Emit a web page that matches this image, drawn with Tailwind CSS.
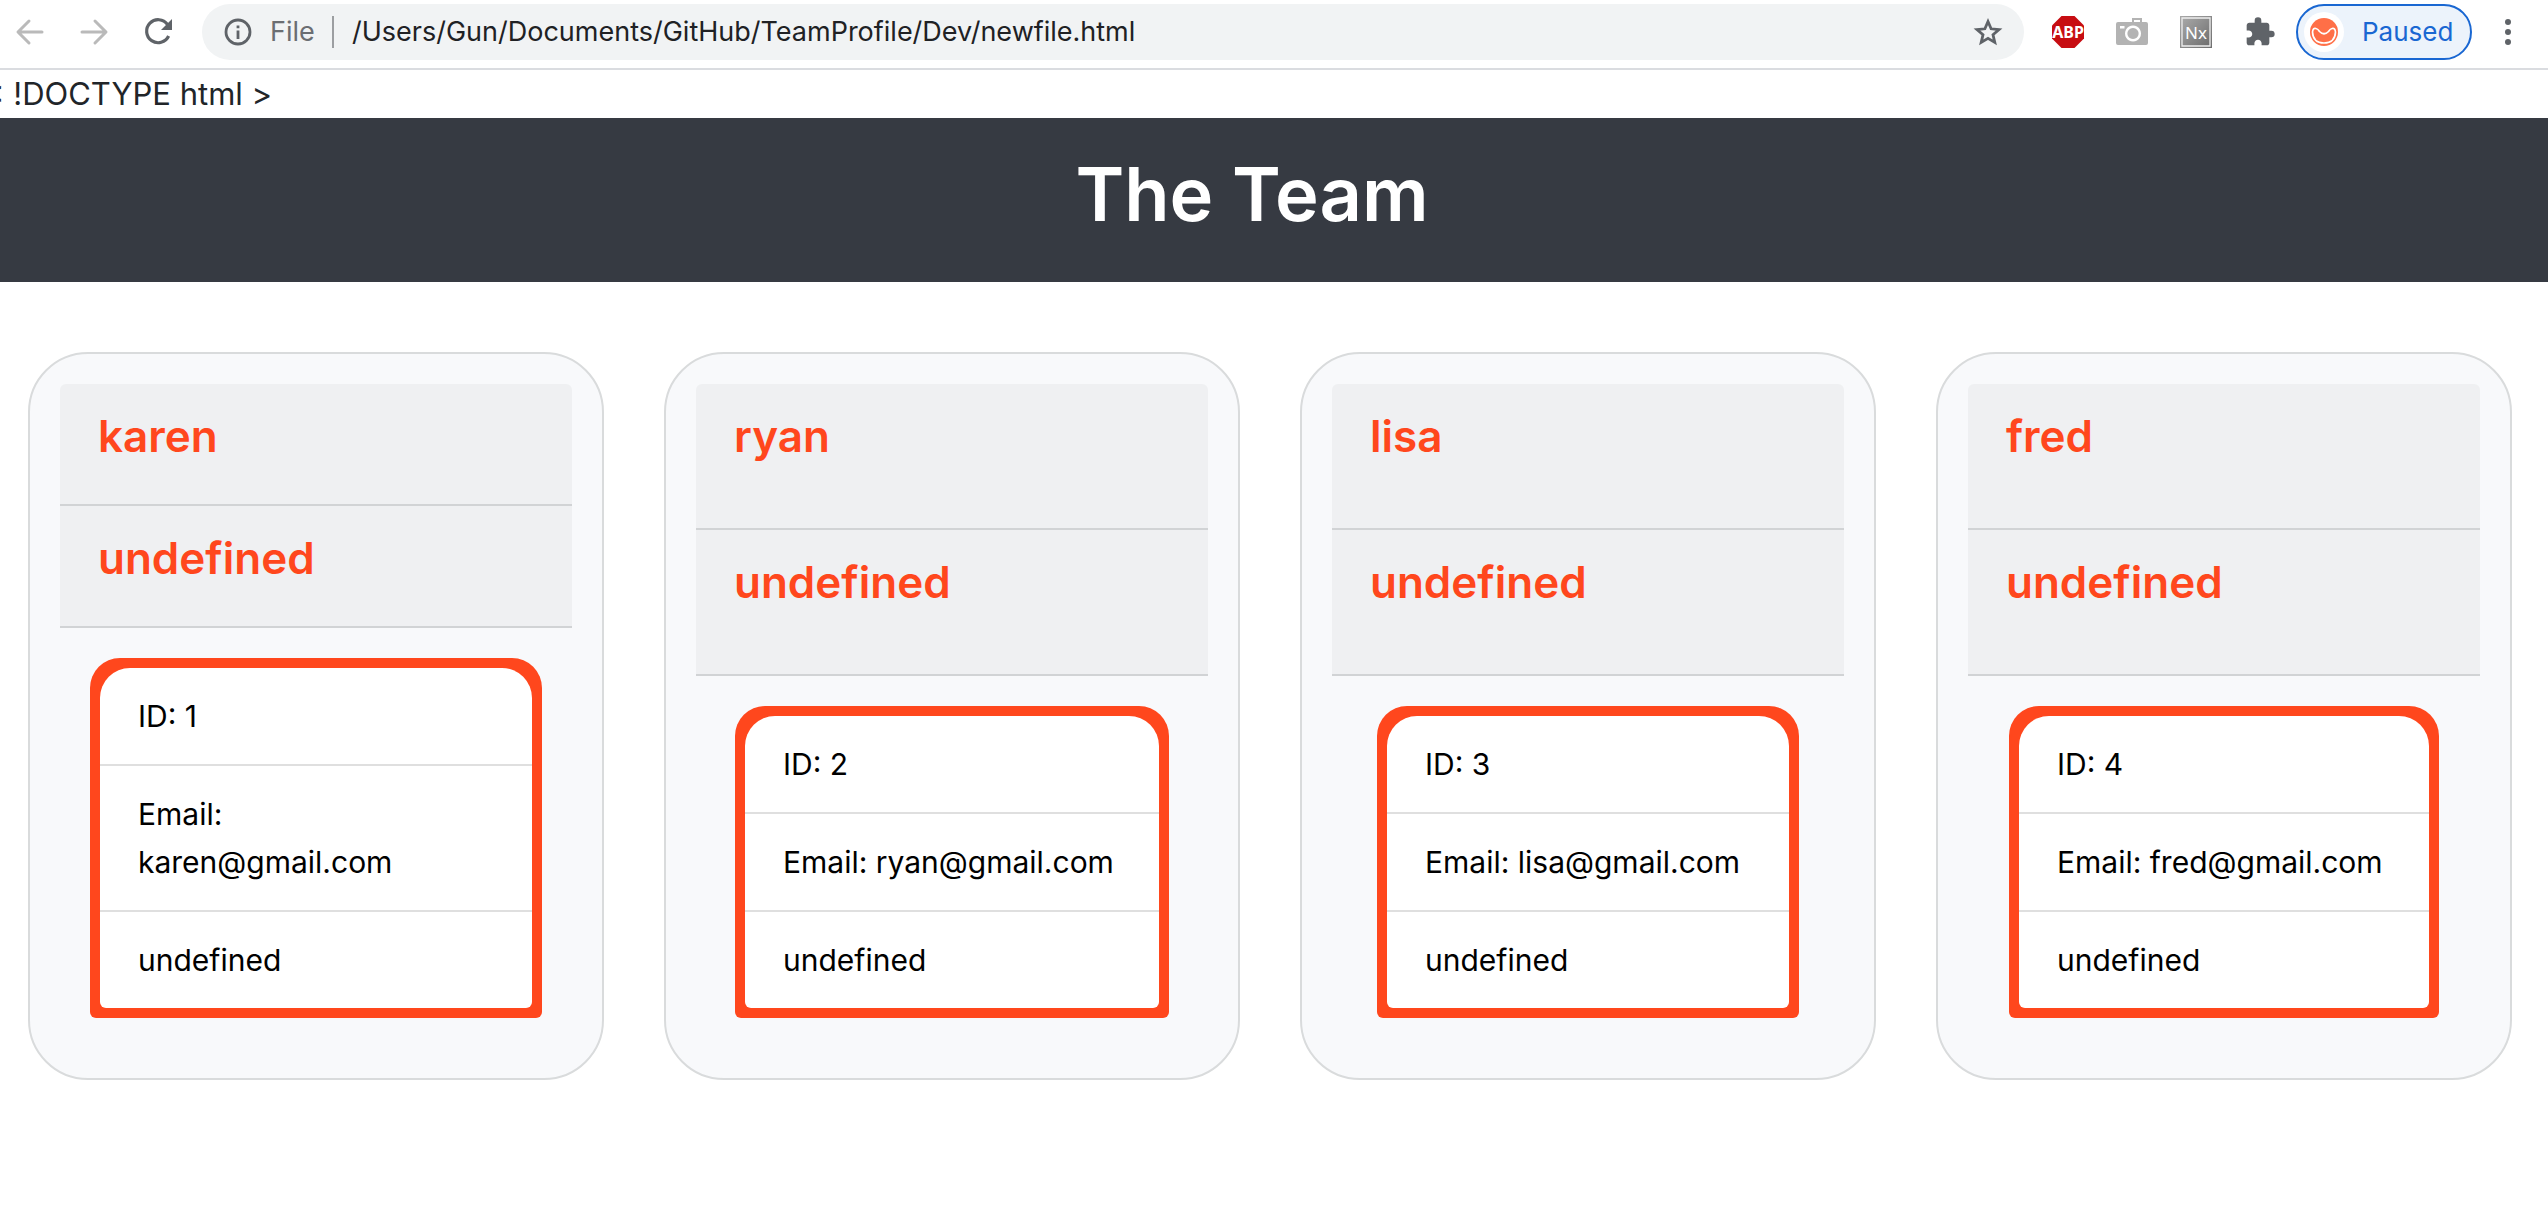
<!DOCTYPE html>
<html lang="en">
<head>
<meta charset="utf-8">
<title>The Team</title>
<script src="https://cdn.jsdelivr.net/npm/@tailwindcss/browser@4"></script>
</head>
<body class="min-h-screen overflow-x-hidden bg-white font-['Inter',sans-serif] text-[30px] leading-[48px] text-[#212529]">

<!-- Browser toolbar -->
<nav class="flex items-start border-b-2 border-[#dadce0] bg-white pt-1 pr-6 pb-2 pl-3.5 text-[27px] leading-8">
  <div class="flex h-14 items-center gap-8">
    <button type="button" aria-label="Back" class="size-8">
      <svg viewBox="0 0 32 32" class="size-8" fill="none" stroke="#bababa" stroke-width="3" stroke-linecap="round" stroke-linejoin="round"><path d="M28 16H5M15 5L4 16l11 11"/></svg>
    </button>
    <button type="button" aria-label="Forward" class="size-8">
      <svg viewBox="0 0 32 32" class="size-8" fill="none" stroke="#bababa" stroke-width="3" stroke-linecap="round" stroke-linejoin="round"><path d="M4 16h23M17 5l11 11-11 11"/></svg>
    </button>
    <button type="button" aria-label="Reload" class="size-8">
      <svg viewBox="0 0 32 32" class="size-8"><path d="M25.500 8.500A11.500 11.500 0 1 0 26.600 20" fill="none" stroke="#5f6368" stroke-width="3.200"/><path d="M30 3v11H19z" fill="#5f6368"/></svg>
    </button>
  </div>
  <div class="ml-7 flex h-14 flex-1 items-center rounded-full bg-[#f1f3f4] pr-5 pl-5">
    <svg viewBox="0 0 32 32" class="size-8" aria-hidden="true"><circle cx="16" cy="16" r="12" fill="none" stroke="#5f6368" stroke-width="2.800"/><path d="M14.600 14.500h2.800V23h-2.800zM14.600 9.500h2.800v2.800h-2.800z" fill="#5f6368"/></svg>
    <span class="ml-4 w-12 text-[#6b6e72]">File</span>
    <span class="mr-[18px] ml-3.5 h-8 w-0.5 bg-[#9c9ea1]"></span>
    <input type="text" aria-label="Address" value="/Users/Gun/Documents/GitHub/TeamProfile/Dev/newfile.html" class="min-w-0 flex-1 bg-transparent text-[#202124] outline-none">
    <button type="button" aria-label="Bookmark this page" class="size-8">
      <svg viewBox="0 0 32 32" class="size-8" fill="none" stroke="#5f6368" stroke-width="2.800"><path d="M16 5.500l3.100 7.300 7.900.7-6 5.200 1.800 7.700L16 22.300l-6.800 4.100L11 18.700l-6-5.200 7.900-.7z"/></svg>
    </button>
  </div>
  <div class="ml-7 flex h-14 items-center gap-8">
    <button type="button" aria-label="AdBlock Plus" class="size-8">
      <svg viewBox="0 0 32 32" class="size-8"><path d="M9.500 0h13L32 9.500v13L22.500 32h-13L0 22.500v-13z" fill="#c70d12"/><text x="16" y="22" text-anchor="middle" font-family="Noto Sans, sans-serif" font-weight="700" font-size="16" fill="#fff">ABP</text></svg>
    </button>
    <button type="button" aria-label="Screenshot" class="size-8">
      <svg viewBox="0 0 32 32" class="size-8"><path fill="#b3b3b3" fill-rule="evenodd" d="M2 6h14V2h10v4h4q2 0 2 2v19q0 2-2 2H2q-2 0-2-2V8q0-2 2-2zm16 0h6V4h-6zM4 10v2.500h4.500V10zm13-.5a8 8 0 1 0 .01 0zm0 2.400a5.600 5.600 0 1 1-.01 0z"/></svg>
    </button>
    <button type="button" aria-label="Nx" class="size-8">
      <svg viewBox="0 0 32 32" class="size-8"><defs><linearGradient id="nx" x1="0" y1="0" x2="1" y2="1"><stop stop-color="#a8a8a8"/><stop offset="1" stop-color="#6e6e6e"/></linearGradient></defs><path fill="url(#nx)" d="M0 0h32v32H0z"/><path fill="url(#nx)" stroke="#eee" stroke-width="1.300" d="M2 2h28v28H2z"/><text x="16" y="23" text-anchor="middle" font-family="Noto Sans, sans-serif" font-size="17" fill="#fff">Nx</text></svg>
    </button>
    <button type="button" aria-label="Extensions" class="size-8">
      <svg viewBox="0 0 24 24" class="size-8"><path fill="#5f6368" d="M20.500 11H19V7c0-1.100-.9-2-2-2h-4V3.500a2.500 2.500 0 0 0-5 0V5H4c-1.100 0-1.990.9-1.990 2v3.800H3.500c1.490 0 2.700 1.210 2.700 2.700s-1.210 2.700-2.700 2.700H2V20c0 1.100.9 2 2 2h3.800v-1.500c0-1.490 1.210-2.700 2.700-2.700s2.700 1.210 2.700 2.700V22H17c1.100 0 2-.9 2-2v-4h1.500a2.500 2.500 0 0 0 0-5z"/></svg>
    </button>
  </div>
  <button type="button" class="ml-5 flex h-14 w-44 items-center gap-[18px] rounded-full border-2 border-[#1967d2] bg-[#ecf3fb] pl-1.5 text-[26px] text-[#1967d2]">
    <svg viewBox="0 0 40 40" class="size-10" aria-hidden="true"><circle cx="20" cy="20" r="20" fill="#fff"/><circle cx="20" cy="20" r="14" fill="#ff6f47"/><path d="M8.500 20Q9 15.500 12 16.500Q14 17 15.500 19.500Q20 24 24.500 19.500Q26 17 28 16.500Q31 15.500 31.500 20Q31 31 20 31Q9 31 8.500 20z" fill="none" stroke="#fff" stroke-width="1.700"/></svg>
    <span>Paused</span>
  </button>
  <button type="button" aria-label="Menu" class="mt-3 ml-5 size-8">
    <svg viewBox="0 0 32 32" class="size-8" fill="#5f6368"><circle cx="16" cy="6" r="3"/><circle cx="16" cy="16" r="3"/><circle cx="16" cy="26" r="3"/></svg>
  </button>
</nav>

<!-- Page -->
<p class="-ml-4 text-[31px] leading-[48px]">&lt; !DOCTYPE html &gt;</p>

<header class="bg-[#363a42] pt-7 pr-11 pb-10 text-center text-white">
  <h1 class="text-[74px] leading-[96px] font-semibold">The Team</h1>
</header>

<main class="grid grid-cols-4 gap-[60px] pt-[70px] pr-9 pl-7 text-black">
  <section class="flex flex-col rounded-[60px] border-2 border-[#d9dbdc] bg-[#f8f9fb] p-[30px]">
    <h2 class="flex-1 rounded-t-md border-b-2 border-[#d1d3d5] bg-[#eff0f2] px-[38px] pt-6 pb-10 text-[44px] leading-[56px] font-semibold text-[#ff471d]">karen</h2>
    <h2 class="flex-1 border-b-2 border-[#d1d3d5] bg-[#eff0f2] px-[38px] pt-6 pb-10 text-[44px] leading-[56px] font-semibold text-[#ff471d]">undefined</h2>
    <div class="flex justify-center p-[30px]">
      <ul class="w-full rounded-t-[30px] rounded-b-md bg-[#ff471d] p-2.5">
        <li class="rounded-t-[30px] border-b-2 border-[#dfdfdf] bg-white px-[38px] py-6">ID: 1</li>
        <li class="border-b-2 border-[#dfdfdf] bg-white px-[38px] py-6">Email:<br>karen@gmail.com</li>
        <li class="rounded-b-md bg-white px-[38px] py-6">undefined</li>
      </ul>
    </div>
  </section>

  <section class="flex flex-col rounded-[60px] border-2 border-[#d9dbdc] bg-[#f8f9fb] p-[30px]">
    <h2 class="flex-1 rounded-t-md border-b-2 border-[#d1d3d5] bg-[#eff0f2] px-[38px] pt-6 pb-10 text-[44px] leading-[56px] font-semibold text-[#ff471d]">ryan</h2>
    <h2 class="flex-1 border-b-2 border-[#d1d3d5] bg-[#eff0f2] px-[38px] pt-6 pb-10 text-[44px] leading-[56px] font-semibold text-[#ff471d]">undefined</h2>
    <div class="flex justify-center p-[30px]">
      <ul class="w-[434px] rounded-t-[30px] rounded-b-md bg-[#ff471d] p-2.5">
        <li class="rounded-t-[30px] border-b-2 border-[#dfdfdf] bg-white px-[38px] py-6">ID: 2</li>
        <li class="border-b-2 border-[#dfdfdf] bg-white px-[38px] py-6">Email: ryan@gmail.com</li>
        <li class="rounded-b-md bg-white px-[38px] py-6">undefined</li>
      </ul>
    </div>
  </section>

  <section class="flex flex-col rounded-[60px] border-2 border-[#d9dbdc] bg-[#f8f9fb] p-[30px]">
    <h2 class="flex-1 rounded-t-md border-b-2 border-[#d1d3d5] bg-[#eff0f2] px-[38px] pt-6 pb-10 text-[44px] leading-[56px] font-semibold text-[#ff471d]">lisa</h2>
    <h2 class="flex-1 border-b-2 border-[#d1d3d5] bg-[#eff0f2] px-[38px] pt-6 pb-10 text-[44px] leading-[56px] font-semibold text-[#ff471d]">undefined</h2>
    <div class="flex justify-center p-[30px]">
      <ul class="w-[422px] rounded-t-[30px] rounded-b-md bg-[#ff471d] p-2.5">
        <li class="rounded-t-[30px] border-b-2 border-[#dfdfdf] bg-white px-[38px] py-6">ID: 3</li>
        <li class="border-b-2 border-[#dfdfdf] bg-white px-[38px] py-6">Email: lisa@gmail.com</li>
        <li class="rounded-b-md bg-white px-[38px] py-6">undefined</li>
      </ul>
    </div>
  </section>

  <section class="flex flex-col rounded-[60px] border-2 border-[#d9dbdc] bg-[#f8f9fb] p-[30px]">
    <h2 class="flex-1 rounded-t-md border-b-2 border-[#d1d3d5] bg-[#eff0f2] px-[38px] pt-6 pb-10 text-[44px] leading-[56px] font-semibold text-[#ff471d]">fred</h2>
    <h2 class="flex-1 border-b-2 border-[#d1d3d5] bg-[#eff0f2] px-[38px] pt-6 pb-10 text-[44px] leading-[56px] font-semibold text-[#ff471d]">undefined</h2>
    <div class="flex justify-center p-[30px]">
      <ul class="w-[430px] rounded-t-[30px] rounded-b-md bg-[#ff471d] p-2.5">
        <li class="rounded-t-[30px] border-b-2 border-[#dfdfdf] bg-white px-[38px] py-6">ID: 4</li>
        <li class="border-b-2 border-[#dfdfdf] bg-white px-[38px] py-6">Email: fred@gmail.com</li>
        <li class="rounded-b-md bg-white px-[38px] py-6">undefined</li>
      </ul>
    </div>
  </section>
</main>
</body>
</html>
